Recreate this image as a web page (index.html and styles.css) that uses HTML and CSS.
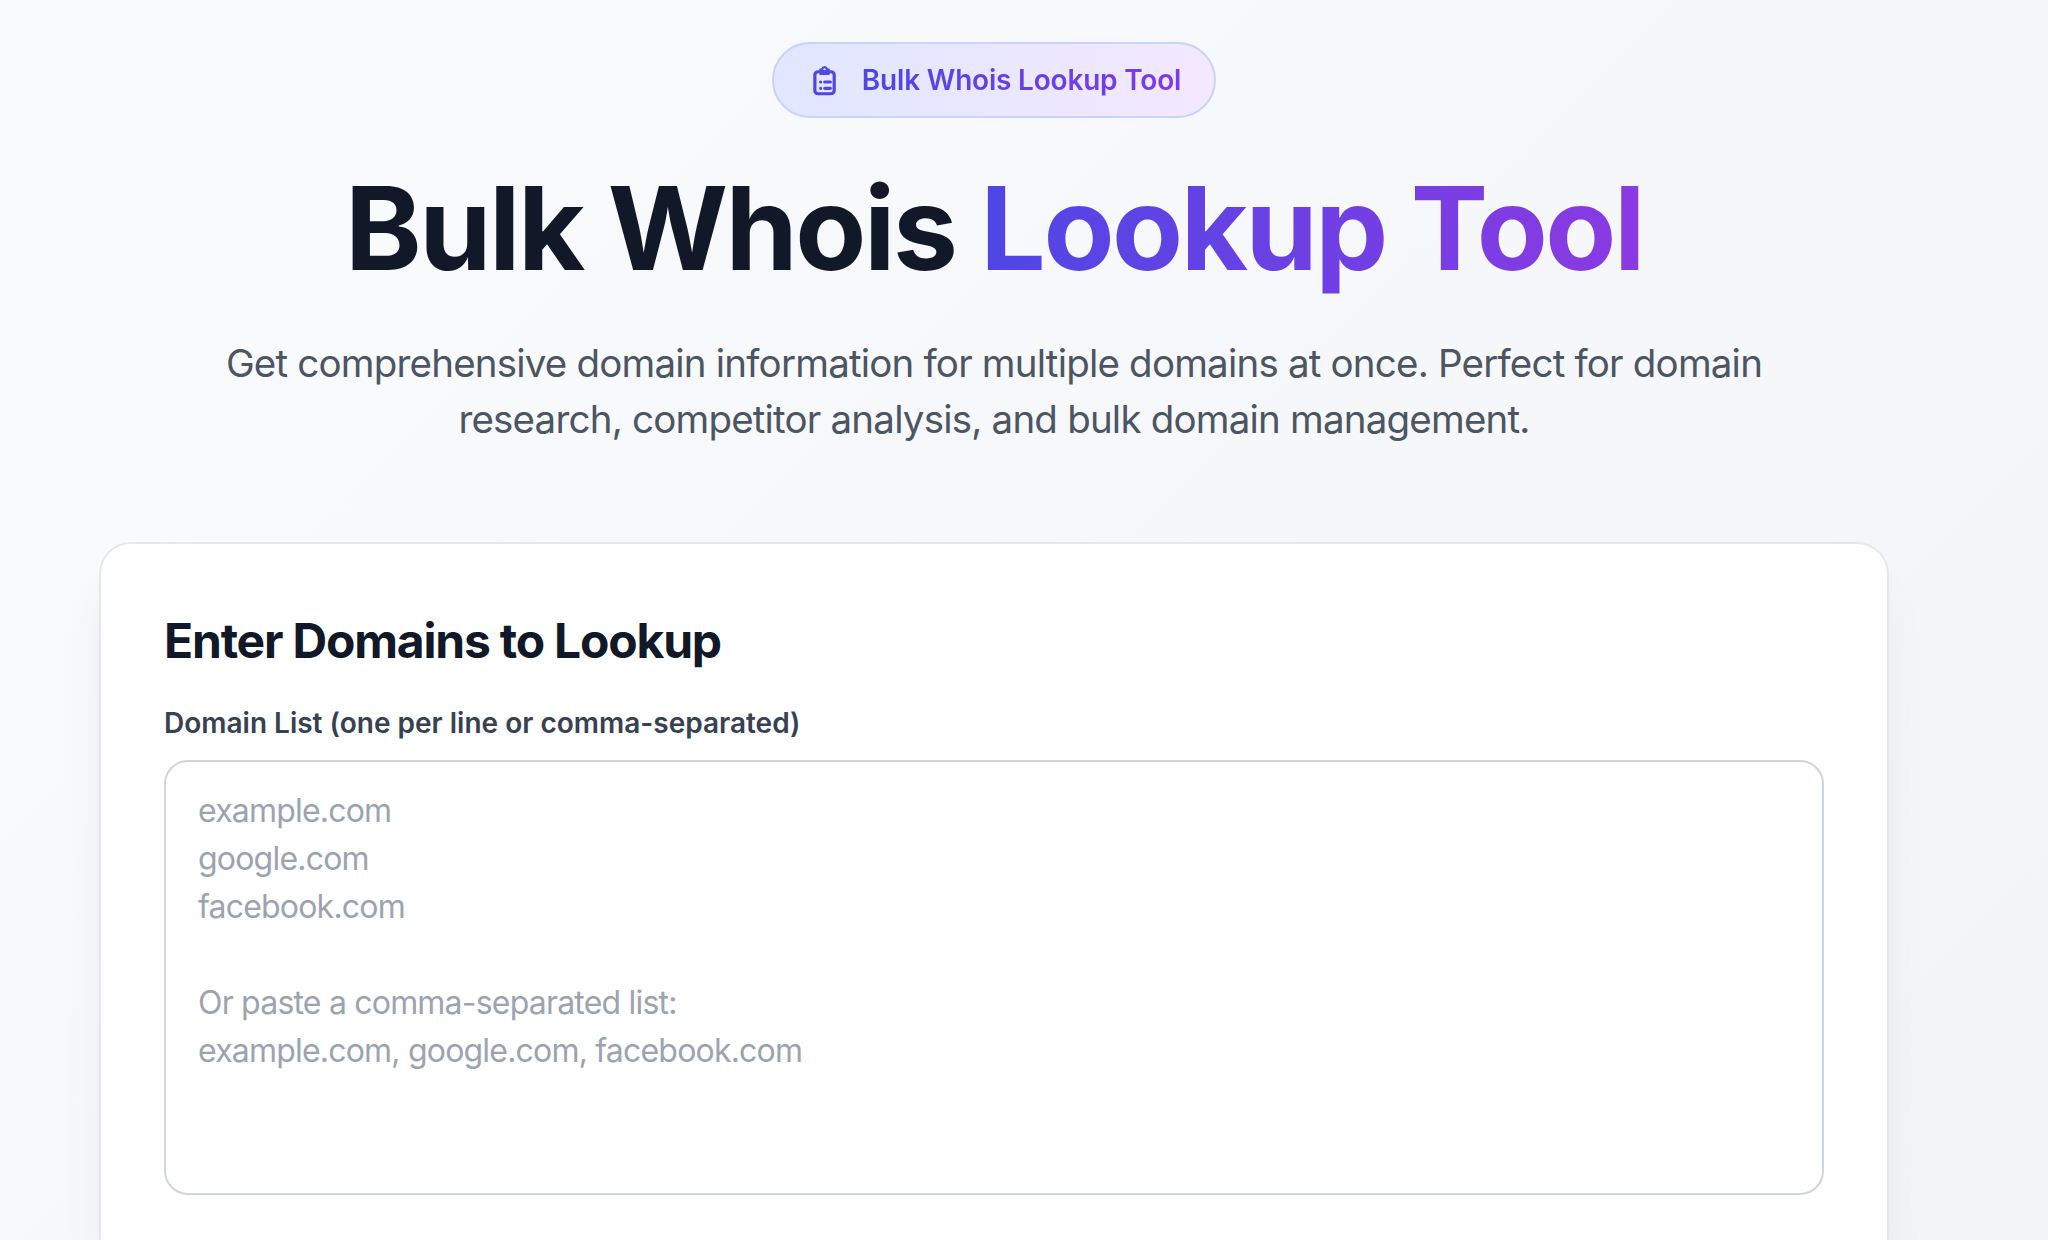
FILE: index.html
```html
<!DOCTYPE html>
<html>
	<head>
		<title>Bulk Whois Lookup Tool</title>
		<link rel="stylesheet" href="styles.css">
	</head>
	<body>
		<div class="hero">
			<div class="badge">
				<svg class="badge-icon" viewBox="0 0 24 24" fill="none" stroke="#4f46e5" stroke-width="2.400" stroke-linecap="round" stroke-linejoin="round">
					<rect x="4.4" y="5.8" width="14.500" height="16.500" rx="2.500"/>
					<path stroke="none" fill="#4f46e5" fill-rule="evenodd" d="M8.500 3.300h.7a2.600 2.600 0 0 1 5 0h.6a.8.8 0 0 1 .8.8v3.400a.8.8 0 0 1-.8.8H8.500a.8.8 0 0 1-.8-.8V4.100a.8.8 0 0 1 .8-.8zM11.700 3.200a.9.9 0 1 0 0 1.800.9.9 0 0 0 0-1.800z"/>
					<path d="M8.750 13.500h.01M11.800 13.500h4.200M8.750 18.250h.01M11.800 18.250h4.200"/>
				</svg>
				<span class="badge-text">Bulk Whois Lookup Tool</span>
			</div>
			<h1 class="title">Bulk Whois <span class="title-accent">Lookup Tool</span></h1>
			<p class="lead">Get comprehensive domain information for multiple domains at once. Perfect for domain research, competitor analysis, and bulk domain management.</p>
		</div>
		<div class="card">
			<h2 class="card-title">Enter Domains to Lookup</h2>
			<label class="field-label" for="domains">Domain List (one per line or comma-separated)</label>
			<textarea class="field" id="domains" placeholder="example.com
google.com
facebook.com

Or paste a comma-separated list:
example.com, google.com, facebook.com"></textarea>
		</div>
	</body>
</html>
```

FILE: styles.css
```css
html{
	height: 100%;
}
body{
	display: flex;
	flex-direction: column;
	margin: 0;
	height: 100%;
	padding: 42px 159px 0 99px;
	box-sizing: border-box;
	overflow: hidden;
	font-family: Inter, "Liberation Sans", sans-serif;
	background: linear-gradient(135deg, #fafbfd 0%, #f3f4f7 100%);
}
.hero{
	display: flex;
	flex-direction: column;
	align-items: center;
	text-align: center;
}
.badge{
	display: flex;
	align-items: center;
	gap: 21px;
	height: 76px;
	box-sizing: border-box;
	padding: 0 33px 0 35px;
	border: 2px solid #c7d2fe;
	border-radius: 38px;
	background: linear-gradient(90deg, #e0e7ff, #f3e8ff);
}
.badge-icon{
	width: 32px;
	height: 32px;
}
.badge-text{
	font-size: 28px;
	font-weight: 600;
	letter-spacing: -0.2px;
	background: linear-gradient(90deg, #4f46e5, #7c3aed);
	-webkit-background-clip: text;
	background-clip: text;
	color: transparent;
}
.title{
	margin: 49px 0 0;
	font-size: 116px;
	line-height: 123px;
	font-weight: 700;
	letter-spacing: -2.5px;
	white-space: nowrap;
	color: #111827;
}
.title-accent{
	background: linear-gradient(90deg, #4f46e5, #8b3ae2);
	-webkit-background-clip: text;
	background-clip: text;
	color: transparent;
}
.lead{
	margin: 45px 0 0;
	max-width: 1600px;
	font-size: 38.5px;
	line-height: 56px;
	letter-spacing: -0.8px;
	color: #4b5563;
}
.card{
	flex: 1;
	margin-top: 95px;
	padding: 64px 63px 0;
	box-sizing: border-box;
	background: #fff;
	border: 2px solid #e5e7eb;
	border-bottom: none;
	border-radius: 32px 32px 0 0;
	box-shadow: 0 40px 50px -10px rgba(0,0,0,0.08), 0 20px 20px -10px rgba(0,0,0,0.03);
}
.card-title{
	margin: 1px 0 0;
	font-size: 48px;
	line-height: 64px;
	font-weight: 700;
	letter-spacing: -1.2px;
	color: #111827;
}
.field-label{
	display: block;
	margin: 30px 0 17px;
	font-size: 28px;
	line-height: 40px;
	font-weight: 600;
	color: #374151;
}
.field{
	display: block;
	width: 100%;
	height: 435px;
	padding: 25px 32px;
	box-sizing: border-box;
	border: 2px solid #d1d5db;
	border-radius: 24px;
	outline: none;
	resize: none;
	font-family: inherit;
	font-size: 32px;
	line-height: 48px;
	letter-spacing: -0.8px;
	color: #111827;
}
.field::placeholder{
	color: #9ca3af;
}
```
